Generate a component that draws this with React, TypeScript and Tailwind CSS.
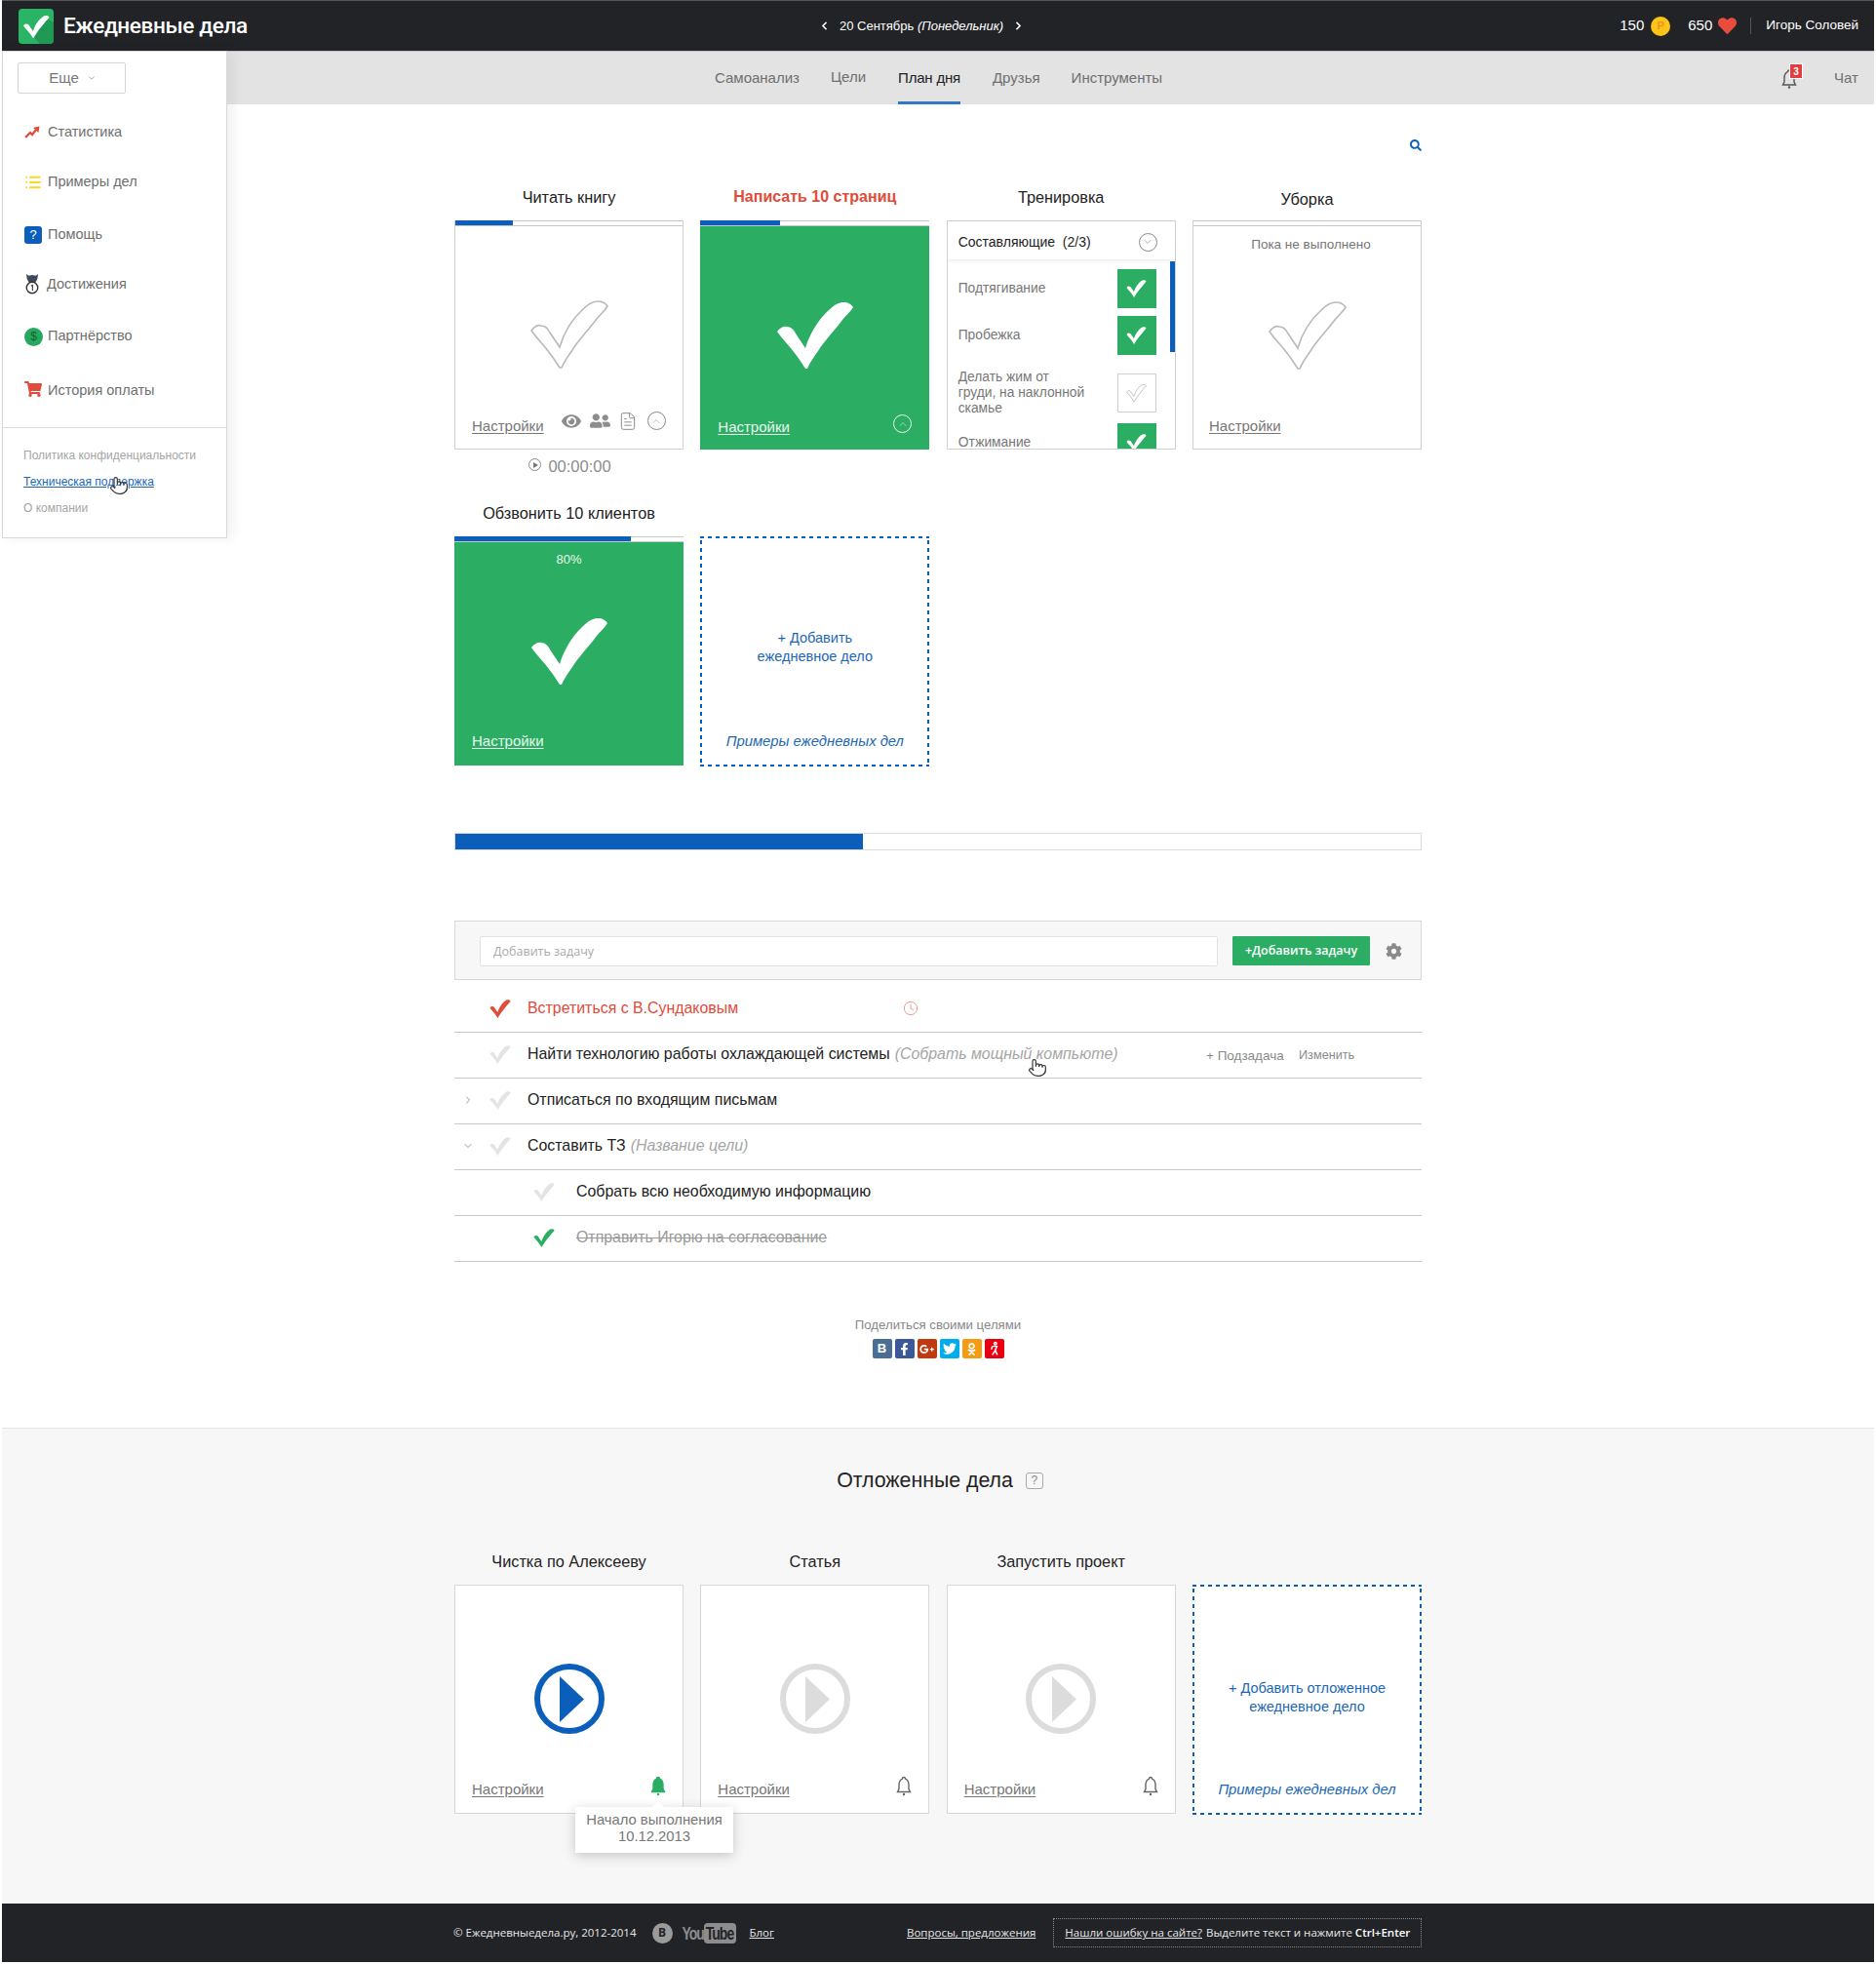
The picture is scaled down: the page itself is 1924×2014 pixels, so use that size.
import { ChevronDown, ChevronLeft, ChevronRight, ChevronUp, Clock, FileText, List, Pointer } from "lucide-react";
import { FaCog, FaEye, FaFacebookF, FaGooglePlusG, FaHeart, FaOdnoklassniki, FaSearch, FaShoppingCart, FaTwitter, FaUserFriends } from "react-icons/fa";

const TICK =
  "M0 30C3 26 7 24 10 25C14 25 17 28 19 32L29 47C33 33 42 18 53 8C59 2 64 0 68 0C73 0 76 2 78 5C75 10 71 13 67 18C58 30 48 40 42 50C37 57 33 63 31 68H29C24 60 19 53 14 47C9 41 4 36 0 30Z";

function Tick({ className, outline, small }: { className?: string; outline?: boolean; small?: boolean }) {
  return (
    <svg viewBox="-1 -1 80 70" className={className}>
      <path d={TICK} fill={outline ? "none" : "currentColor"} stroke={outline ? "#b9b9b9" : "none"} strokeWidth={outline ? (small ? 3.5 : 1.6) : 0} />
    </svg>
  );
}

function BellIcon({ className, filled }: { className?: string; filled?: boolean }) {
  return (
    <svg viewBox="0 0 16 20" className={className}>
      <path
        d="M8 1C7 1 6.5 1.8 6.5 2.6C4 3.5 3 6 3 9V13L1.5 16H14.5L13 13V9C13 6 12 3.5 9.5 2.6C9.5 1.8 9 1 8 1Z"
        fill={filled ? "currentColor" : "none"}
        stroke="currentColor"
        strokeWidth="1.4"
      />
      <circle cx="8" cy="18.5" r="1.2" fill="currentColor" />
    </svg>
  );
}

function Round({ up, className }: { up?: boolean; className?: string }) {
  return (
    <span className={`flex h-[19px] w-[19px] items-center justify-center rounded-full border ${className}`}>
      {up ? <ChevronUp size={12} strokeWidth={1.2} /> : <ChevronDown size={12} strokeWidth={1.2} />}
    </span>
  );
}

function Header() {
  return (
    <header className="flex h-[53px] items-center border-t border-t-[#55565a] border-b border-b-[#bdbdbd] bg-[#222327] text-white">
      <div className="flex w-[837px] items-center pl-[17px]">
        <svg viewBox="0 0 36 36" className="h-9 w-9">
          <rect width="36" height="36" rx="4" fill="#2ab566" />
          <path d="M14 27L26 8L36 14V32C36 34 34 36 32 36H22Z" fill="#1f9a54" />
          <g transform="translate(5 7) scale(0.34)">
            <path d={TICK} fill="#fff" />
          </g>
        </svg>
        <span className="ml-[10px] font-['Roboto'] text-[22.6px] font-medium tracking-[-0.4px]">Ежедневные дела</span>
      </div>
      <div className="flex items-center text-[13px]">
        <ChevronLeft size={13} strokeWidth={3} />
        <span className="mx-[9px]">
          20 Сентябрь <i>(Понедельник)</i>
        </span>
        <ChevronRight size={13} strokeWidth={3} />
      </div>
      <div className="ml-auto flex items-center pr-[16px]">
        <span className="text-[15px]">150</span>
        <span className="ml-[7px] flex h-5 w-5 items-center justify-center rounded-full bg-[#fcc419] text-[11px] font-bold text-[#e8961a]">Р</span>
        <span className="ml-[18px] text-[15px]">650</span>
        <FaHeart className="ml-[6px] text-[#e74c3c]" size={19} />
        <span className="ml-[14px] h-[17px] w-px bg-[#55565a]" />
        <span className="ml-[15px] text-[13.5px]">Игорь Соловей</span>
      </div>
    </header>
  );
}

function SubNav() {
  return (
    <nav className="flex h-[54px] bg-[#e3e3e3] pl-[731px] text-[15px] text-[#6f6f6f]">
      <div className="flex gap-[32px]">
        <a className="pt-[16px]">Самоанализ</a>
        <a className="pt-[15px]">Цели</a>
        <a className="ml-[1px] h-[54px] border-b-[3px] border-[#2f78c4] pt-[16px] font-medium tracking-[-0.2px] text-[#222]">План дня</a>
        <a className="ml-[1px] pt-[16px]">Друзья</a>
        <a className="pt-[16px]">Инструменты</a>
      </div>
      <div className="ml-auto flex items-start pr-[16px]">
        <div className="relative mt-[18px] mr-[38px]">
          <BellIcon className="h-5 w-4 text-[#555]" />
          <span className="absolute top-[-6px] left-[8px] flex h-[16px] w-[14px] items-center justify-center border border-white bg-[#e03f3f] text-[10px] font-bold text-white">3</span>
        </div>
        <span className="pt-[16px]">Чат</span>
      </div>
    </nav>
  );
}

function MedalIcon({ className }: { className?: string }) {
  return (
    <svg viewBox="0 0 16 24" className={className}>
      <path d="M1 0L4 2L8 1L12 2L15 0L14 6L11 11H5L2 6Z" fill="#3d4a5c" />
      <circle cx="8" cy="16" r="6.6" fill="#fff" stroke="#333" strokeWidth="1.6" />
      <path d="M6.8 14L8.4 13V19.5" fill="none" stroke="#333" strokeWidth="1.2" />
    </svg>
  );
}

function TrendIcon({ className }: { className?: string }) {
  return (
    <svg viewBox="0 0 16 13" className={className}>
      <path d="M1 12L6 7L8 9L12 4" fill="none" stroke="#e04b3a" strokeWidth="2.2" />
      <path d="M9 2L15.5 0.5L14.5 7Z" fill="#e04b3a" />
    </svg>
  );
}

const sideItems = [
  { label: "Статистика", h: 49, w: "w-[24px]", icon: <TrendIcon className="h-[13px] w-[16px]" /> },
  { label: "Примеры дел", h: 54, w: "w-[24px]", icon: <List size={18} strokeWidth={2.8} className="text-[#fcd91f]" /> },
  { label: "Помощь", h: 53, w: "w-[24px]", icon: <span className="flex h-[18px] w-[18px] items-center justify-center rounded-[3px] bg-[#0b5fbb] text-[13px] text-white">?</span> },
  { label: "Достижения", h: 49, w: "w-[23px]", icon: <MedalIcon className="h-[21px] w-[16px]" /> },
  { label: "Партнёрство", h: 58, w: "w-[24px]", icon: <span className="flex h-[19px] w-[19px] items-center justify-center rounded-full bg-[#27a860] text-[12px] text-[#12602f]">$</span> },
  { label: "История оплаты", h: 53, w: "w-[24px]", icon: <FaShoppingCart size={18} className="-mt-[3px] text-[#e04b3a]" /> },
];

function Sidebar() {
  return (
    <aside className="absolute top-[52px] left-[2px] z-10 h-[500px] w-[231px] border border-[#d8d8d8] bg-white text-[#6f6f6f] shadow-[6px_0_12px_rgba(0,0,0,0.06)]">
      <div className="ml-[15px] mt-[11px] flex h-[32px] w-[111px] items-center justify-center rounded-[2px] border border-[#d5d5d5] pl-[2px] text-[15px] text-[#777]">
        Еще <ChevronDown size={10} className="ml-[8px] text-[#999]" />
      </div>
      <ul className="mt-[15px]">
        {sideItems.map((it) => (
          <li key={it.label} className="flex items-center pl-[22px] text-[14.5px]" style={{ height: it.h }}>
            <span className={`flex items-center ${it.w}`}>{it.icon}</span>
            {it.label}
          </li>
        ))}
      </ul>
      <div className="mt-[11px] border-t border-[#dedede] pt-[19px] pl-[21px] text-[12px] text-[#a5a5a5]">
        <div className="h-[27px]">Политика конфиденциальности</div>
        <div className="relative h-[27px]">
          <a className="text-[#1d68b5] underline">Техническая поддержка</a>
          <Pointer size={20} strokeWidth={1.4} fill="#fff" className="absolute top-[3px] left-[88px] text-[#333]" />
        </div>
        <div>О компании</div>
      </div>
    </aside>
  );
}

function Settings({ light }: { light?: boolean }) {
  return <a className={`text-[15px] leading-[22px] underline underline-offset-2 ${light ? "text-[#e8f7ee]" : "text-[#777]"}`}>Настройки</a>;
}

function TopBar({ pct }: { pct: number }) {
  return (
    <div className="h-[6px] border-y border-[#c8c8c8] bg-white">
      <div className="-mt-px h-[5px] bg-[#0b5fbb]" style={{ width: pct }} />
    </div>
  );
}

function Title({ children, red, low }: { children: React.ReactNode; red?: boolean; low?: boolean }) {
  return (
    <div className={`mb-[11px] h-[24px] text-center leading-[22px] ${red ? "text-[16px] font-bold text-[#e04b3a]" : "text-[16.3px] text-[#222]"} ${low ? "pt-[2px]" : ""}`}>
      {children}
    </div>
  );
}

function OpenCard() {
  return (
    <div className="relative flex h-[235px] flex-col border-x border-b border-[#d0d0d0] bg-white">
      <TopBar pct={59} />
      <Tick outline className="mt-[76px] ml-[77px] h-[70px] w-[80px]" />
      <div className="absolute bottom-[12px] left-[17px] flex items-end text-[#8d8d8d]">
        <Settings />
        <div className="flex items-center pb-[6px]">
          <FaEye size={20} className="ml-[18px]" />
          <FaUserFriends size={21} className="ml-[9px]" />
          <FileText size={20} strokeWidth={1.2} className="ml-[8px]" />
          <Round up className="ml-[10px] border-[#888]" />
        </div>
      </div>
    </div>
  );
}

function DoneCard({ pct, percent, chevron, low }: { pct: number; percent?: boolean; chevron?: boolean; low?: boolean }) {
  return (
    <div className="relative h-[235px] bg-[#2bae63] text-white">
      <TopBar pct={pct} />
      {percent && <div className="absolute top-[14px] w-full text-center text-[13px] text-[#e8f7ee]">80%</div>}
      <Tick className="mt-[77px] ml-[78px] h-[70px] w-[80px]" />
      <div className={`absolute right-[18px] left-[18px] flex items-end justify-between ${low ? "bottom-[14px]" : "bottom-[12px]"}`}>
        <Settings light />
        {chevron && <Round up className="mb-[5px] border-[#e8f7ee] text-[#e8f7ee]" />}
      </div>
    </div>
  );
}

function Box({ done }: { done?: boolean }) {
  return (
    <span className={`flex h-[40px] w-[40px] shrink-0 items-center justify-center ${done ? "bg-[#2bae63] text-white" : "border border-[#d0d0d0]"}`}>
      {done ? <Tick className="h-[18px] w-[21px]" /> : <Tick outline small className="h-[18px] w-[21px]" />}
    </span>
  );
}

function PartsCard() {
  return (
    <div className="relative h-[235px] overflow-hidden border border-[#d0d0d0] bg-white">
      <div className="flex h-[40px] items-center justify-between border-b border-[#f0f0f0] pt-[3px] pr-[18px] pl-[11px] text-[14px] text-[#222] shadow-[0_2px_3px_rgba(0,0,0,0.04)]">
        <span className="whitespace-pre">Составляющие  (2/3)</span>
        <Round className="border-[#888] text-[#777]" />
      </div>
      <div className="absolute top-[41px] right-0 h-[93px] w-[5px] bg-[#0b5fbb]" />
      <div className="pt-[9px] pr-[19px] pl-[11px] text-[13.8px] leading-[16px] text-[#777]">
        <div className="flex items-center justify-between"><span>Подтягивание</span><Box done /></div>
        <div className="mt-[8px] flex items-center justify-between"><span>Пробежка</span><Box done /></div>
        <div className="mt-[19px] flex h-[40px] items-center justify-between"><span className="w-[135px]">Делать жим от<br />груди, на наклонной скамье</span><Box /></div>
        <div className="mt-[11px] flex items-center justify-between"><span>Отжимание</span><Box done /></div>
      </div>
    </div>
  );
}

function PendingCard() {
  return (
    <div className="relative h-[235px] border-x border-b border-[#d0d0d0] bg-white">
      <TopBar pct={0} />
      <div className="pt-[9px] pl-[8px] text-center text-[13.5px] text-[#777]">Пока не выполнено</div>
      <Tick outline className="mt-[48px] ml-[77px] h-[70px] w-[80px]" />
      <div className="absolute bottom-[12px] left-[16px] flex"><Settings /></div>
    </div>
  );
}

function AddCard({ lines, top, white }: { lines: [string, string]; top: string; white?: boolean }) {
  return (
    <div
      className={`relative flex h-[236px] flex-col items-center text-[#1d68b5] [background-image:linear-gradient(90deg,#0b5fbb_50%,transparent_50%),linear-gradient(90deg,#0b5fbb_50%,transparent_50%),linear-gradient(0deg,#0b5fbb_50%,transparent_50%),linear-gradient(0deg,#0b5fbb_50%,transparent_50%)] [background-size:8px_2px,8px_2px,2px_8px,2px_8px] [background-position:0_0,0_100%,0_0,100%_0] [background-repeat:repeat-x,repeat-x,repeat-y,repeat-y] ${white ? "bg-white" : ""}`}
    >
      <div className={`text-center text-[14.5px] leading-[19px] ${top}`}>
        {lines[0]}
        <br />
        {lines[1]}
      </div>
      <i className="absolute bottom-[15px] text-[14.8px]">Примеры ежедневных дел</i>
    </div>
  );
}

const tasks = [
  { text: "Найти технологию работы охлаждающей системы", goal: "(Собрать мощный компьюте)", hover: true },
  { text: "Отписаться по входящим письмам", chev: "r" },
  { text: "Составить ТЗ", goal: "(Название цели)", chev: "d" },
];

function TaskList() {
  return (
    <div className="mt-[7px] text-[15.9px]">
      <div className="flex h-[47px] items-center border-b border-[#c8c8c8] pb-[2px] pl-[36px] text-[#e04b3a]">
        <Tick className="h-[19px] w-[22px]" />
        <span className="ml-[17px] w-[385px]">Встретиться с В.Сундаковым</span>
        <Clock size={16} strokeWidth={1.3} className="text-[#e98a7e]" />
      </div>
      {tasks.map((t) => (
        <div key={t.text} className="relative flex h-[47px] items-center border-b border-[#c8c8c8] pb-[2px] text-[#222]">
          <span className="flex w-[27px] justify-center text-[#555]">
            {t.chev === "r" && <ChevronRight size={12} strokeWidth={1.2} />}
            {t.chev === "d" && <ChevronDown size={12} strokeWidth={1.2} />}
          </span>
          <Tick className="ml-[9px] h-[19px] w-[22px] text-[#e4e4e4]" />
          <span className="ml-[17px]">{t.text}</span>
          {t.goal && <i className="ml-[5px] text-[#a5a5a5]">{t.goal}</i>}
          {t.hover && (
            <>
              <span className="absolute left-[771px] top-[14px] text-[13.5px] text-[#8a8a8a]">+ Подзадача</span>
              <span className="absolute left-[866px] top-[14px] text-[12.7px] text-[#8a8a8a]">Изменить</span>
              <Pointer size={20} strokeWidth={1.4} fill="#fff" className="absolute top-[26px] left-[588px] text-[#333]" />
            </>
          )}
        </div>
      ))}
      <div className="flex h-[47px] items-center border-b border-[#c8c8c8] pb-[2px] pl-[81px] text-[#222]">
        <Tick className="h-[19px] w-[22px] text-[#e4e4e4]" />
        <span className="ml-[22px]">Собрать всю необходимую информацию</span>
      </div>
      <div className="flex h-[47px] items-center border-b border-[#c8c8c8] pb-[2px] pl-[81px] text-[#9a9a9a]">
        <Tick className="h-[19px] w-[22px] text-[#2bae63]" />
        <span className="ml-[20px] px-[2px] line-through">Отправить Игорю на согласование</span>
      </div>
    </div>
  );
}

function Share() {
  const cls = "flex h-5 w-5 items-center justify-center rounded-[2px] text-white";
  return (
    <div className="mt-[57px] flex flex-col items-center pb-[71px]">
      <div className="h-[16px] text-[13.2px] leading-[16px] text-[#888]">Поделиться своими целями</div>
      <div className="mt-[6px] flex gap-[3px]">
        <span className={`${cls} bg-[#4b6f94] text-[13px] font-bold`}>В</span>
        <span className={`${cls} bg-[#3b5998]`}><FaFacebookF size={13} /></span>
        <span className={`${cls} bg-[#c0390f]`}><FaGooglePlusG size={15} /></span>
        <span className={`${cls} bg-[#00acee]`}><FaTwitter size={14} /></span>
        <span className={`${cls} bg-[#f59b13]`}><FaOdnoklassniki size={13} /></span>
        <span className={`${cls} bg-[#e60012]`}>
          <svg viewBox="0 0 20 20" className="h-4 w-4" fill="none" stroke="#fff" strokeWidth="1.8">
            <circle cx="11" cy="3.5" r="1.6" />
            <path d="M7 7H13L11 12L13.5 18M11 12L7 18M6 11L7 7" />
          </svg>
        </span>
      </div>
    </div>
  );
}

function PlayCard({ active, children }: { active?: boolean; children?: React.ReactNode }) {
  return (
    <div className="relative h-[235px] border border-[#d8d8d8] bg-white">
      <div className={`mx-auto mt-[80px] flex h-[72px] w-[72px] items-center justify-center rounded-full border-[6px] ${active ? "border-[#0b5fbb]" : "border-[#dcdcdc]"}`}>
        <svg viewBox="0 0 25 47" className="ml-[6px] h-[47px] w-[25px]">
          <path d="M0 0L25 23.5L0 47Z" fill={active ? "#0b5fbb" : "#dcdcdc"} />
        </svg>
      </div>
      <div className="absolute right-[17px] bottom-[13px] left-[17px] flex items-end justify-between">
        <Settings />
        <BellIcon filled={active} className={`mb-[4px] h-[21px] w-[16px] ${active ? "text-[#2bae63]" : "text-[#666]"}`} />
      </div>
      {children}
    </div>
  );
}

function Deferred() {
  return (
    <section className="h-[488px] border-t border-[#e4e4e4] bg-[#f7f7f7]">
      <div className="ml-[464px] w-[992px]">
        <div className="flex items-center justify-center pt-[38px] pb-[57px] pl-[4px]">
          <span className="text-[21.3px] leading-[30px] text-[#222]">Отложенные дела</span>
          <span className="ml-[13px] flex h-[17px] w-[18px] items-center justify-center rounded-[3px] border border-[#aaa] text-[12px] text-[#888]">?</span>
        </div>
        <div className="grid grid-cols-[repeat(4,235px)] gap-x-[17.33px]">
          <div>
            <Title>Чистка по Алексееву</Title>
            <PlayCard active>
              <div className="absolute top-[227px] left-[123px] z-10 h-[47px] w-[162px] bg-white pt-[5px] text-center text-[14.8px] leading-[17px] text-[#777] shadow-[0_3px_12px_rgba(0,0,0,0.2)]">
                <span className="absolute top-[-6px] left-[78px] h-0 w-0 border-x-[7px] border-b-[7px] border-x-transparent border-b-white" />
                Начало выполнения
                <br />
                10.12.2013
              </div>
            </PlayCard>
          </div>
          <div>
            <Title>Статья</Title>
            <PlayCard />
          </div>
          <div>
            <Title>Запустить проект</Title>
            <PlayCard />
          </div>
          <div className="pt-[35px]">
            <AddCard white top="mt-[97px]" lines={["+ Добавить отложенное", "ежедневное дело"]} />
          </div>
        </div>
      </div>
    </section>
  );
}

function Footer() {
  return (
    <footer className="flex h-[60px] items-center bg-[#222327] pl-[463px] font-['Open_Sans'] text-[11.5px] text-[#e6e6e6]">
      <span>© Ежедневныедела.ру, 2012-2014</span>
      <span className="ml-[16px] flex h-[21px] w-[21px] items-center justify-center rounded-full bg-[#9a9a9a] text-[12px] font-bold text-[#222327]">B</span>
      <span className="ml-[10px] flex items-center font-['Liberation_Sans'] text-[14px] font-bold tracking-[-1px] text-[#8d8d8d]">
        <span className="inline-block w-[22px] scale-y-[1.35]">You</span>
        <span className="flex h-[21px] w-[33px] items-center justify-center rounded-[4px] bg-[#8d8d8d] text-[#222327]">
          <span className="inline-block scale-y-[1.35]">Tube</span>
        </span>
      </span>
      <a className="ml-[14px] underline">Блог</a>
      <a className="ml-[136px] underline">Вопросы, предложения</a>
      <div className="ml-[18px] flex h-[30px] w-[378px] items-center border border-dotted border-[#8a8a8a] pl-[11px]">
        <a className="underline">Нашли ошибку на сайте?</a>
        <span className="ml-[4px]">Выделите текст и нажмите <b className="font-semibold text-white">Ctrl+Enter</b></span>
      </div>
    </footer>
  );
}

export default function App() {
  return (
    <div className="relative min-h-[2014px] w-[1924px] bg-white px-[2px] font-['Liberation_Sans',sans-serif]">
      <Header />
      <SubNav />
      <Sidebar />
      <main className="ml-[464px] w-[992px]">
        <div className="flex h-[84px] justify-end pt-[36px]">
          <FaSearch size={12} className="text-[#0b5fbb]" />
        </div>
        <div className="grid grid-cols-[repeat(4,235px)] gap-x-[17.33px]">
          <div>
            <Title>Читать книгу</Title>
            <OpenCard />
            <div className="flex h-[54px] items-start justify-center pt-[5px] pl-[2px] text-[16.5px] text-[#8d8d8d]">
              <span className="mt-[4px] mr-[7px] flex h-[13px] w-[13px] items-center justify-center rounded-full border border-[#888]">
                <span className="ml-[1px] h-0 w-0 border-y-[3px] border-l-[5px] border-y-transparent border-l-[#777]" />
              </span>
              00:00:00
            </div>
          </div>
          <div>
            <Title red>Написать 10 страниц</Title>
            <DoneCard pct={82} chevron />
          </div>
          <div>
            <Title>Тренировка</Title>
            <PartsCard />
          </div>
          <div>
            <Title low>Уборка</Title>
            <PendingCard />
          </div>
          <div>
            <Title>Обзвонить 10 клиентов</Title>
            <DoneCard pct={181} percent low />
            <div className="h-[54px]" />
          </div>
          <div className="pt-[35px]">
            <AddCard top="mt-[95px]" lines={["+ Добавить", "ежедневное дело"]} />
          </div>
        </div>

        <div className="mt-[15px] h-[18px] border border-[#dcdcdc] bg-white">
          <div className="h-full w-[418px] bg-[#0b5fbb]" />
        </div>

        <div className="mt-[72px] flex h-[61px] items-center border border-[#d8d8d8] bg-[#f7f7f7] pt-[1px] pl-[25px]">
          <input
            placeholder="Добавить задачу"
            className="h-[31px] w-[757px] rounded-[2px] border border-[#e2e2e2] bg-white px-[13px] font-['Open_Sans'] text-[12.5px] placeholder:text-[#aaaaaa]"
          />
          <button className="ml-[15px] h-[30px] w-[141px] rounded-[1px] bg-[#2bae63] font-['Open_Sans'] text-[12.5px] font-semibold text-white">+Добавить задачу</button>
          <FaCog size={17} className="ml-[16px] text-[#8a8a8a]" />
        </div>

        <TaskList />
        <Share />
      </main>
      <Deferred />
      <Footer />
    </div>
  );
}
